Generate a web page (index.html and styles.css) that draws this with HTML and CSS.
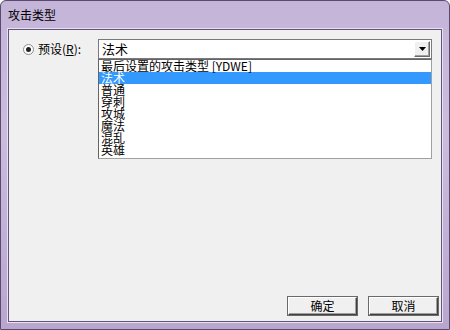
FILE: index.html
```html
<!DOCTYPE html>
<html>
<head>
<meta charset="utf-8">
<link rel="stylesheet" href="styles.css">
</head>
<body>
<div class="window">
  <div class="titlebar"><span class="title">攻击类型</span></div>
  <div class="client">
    <div class="main">
      <div class="preset">
        <span class="radio"><span class="dot"></span></span>
        <span class="label">预设(<u>R</u>):</span>
      </div>
      <div class="combo-col">
        <div class="combo">
          <span class="value">法术</span>
          <span class="drop"><svg width="7" height="4" viewBox="0 0 7 4"><path d="M0 0H7L3.5 4Z" fill="#000"/></svg></span>
        </div>
        <ul class="list">
          <li>最后设置的攻击类型 [YDWE]</li>
          <li class="sel">法术</li>
          <li>普通</li>
          <li>穿刺</li>
          <li>攻城</li>
          <li>魔法</li>
          <li>混乱</li>
          <li>英雄</li>
        </ul>
      </div>
    </div>
    <div class="buttons">
      <button class="btn">确定</button>
      <button class="btn">取消</button>
    </div>
  </div>
</div>
</body>
</html>
```
FILE: styles.css
```css
html, body {
  margin: 0;
  padding: 0;
}
body {
  width: 450px;
  height: 330px;
  overflow: hidden;
  font-family: "Noto Sans CJK SC", "DejaVu Sans", sans-serif;
  font-size: 12px;
  color: #000;
}
.window {
  width: 450px;
  height: 330px;
  box-sizing: border-box;
  display: flex;
  flex-direction: column;
  background: linear-gradient(to bottom, #c4b4d8 0%, #cbbcde 40%, #b9a6ce 100%);
  border: 1px solid #5a4a70;
  border-radius: 6px 6px 0 0;
}
.titlebar {
  height: 28px;
  display: flex;
  align-items: center;
  padding-left: 7px;
  flex: none;
}
.title {
  font-size: 12px;
  line-height: 14px;
  color: #000;
  margin-top: -1px;
}
.client {
  flex: 1;
  margin: 0 7px 7px 7px;
  background: #f0f0f0;
  border: 1px solid #62547a;
  box-shadow: 0 0 0 1px #e8e0f0;
  display: flex;
  flex-direction: column;
}
.main {
  flex: 1;
  display: flex;
  padding-top: 9px;
}
.preset {
  width: 89px;
  display: flex;
  align-items: flex-start;
  padding-top: 3px;
  box-sizing: border-box;
  padding-left: 14px;
}
.radio {
  width: 11px;
  height: 11px;
  box-sizing: border-box;
  border: 1px solid #8a8a8a;
  border-radius: 50%;
  background: #fff;
  display: flex;
  align-items: center;
  justify-content: center;
  margin-top: 2px;
  margin-right: 4px;
}
.dot {
  width: 5px;
  height: 5px;
  border-radius: 50%;
  background: #222;
}
.label {
  font-size: 12px;
  line-height: 14px;
}
.label u {
  text-decoration: underline;
}
.combo-col {
  width: 334px;
  display: flex;
  flex-direction: column;
}
.combo {
  height: 20px;
  box-sizing: border-box;
  border: 1px solid #7a7a7a;
  background: #fff;
  display: flex;
  align-items: center;
  justify-content: space-between;
  padding: 0 1px 0 3px;
}
.value {
  font-size: 13px;
  line-height: 14px;
}
.drop {
  width: 16px;
  height: 16px;
  box-sizing: border-box;
  background: #f0f0f0;
  border: 1px solid;
  border-color: #fff #6a6a6a #6a6a6a #fff;
  box-shadow: inset -1px -1px 0 #a0a0a0;
  display: flex;
  align-items: center;
  justify-content: center;
}
.list {
  list-style: none;
  margin: 0;
  padding: 0 0 2px 0;
  height: 100px;
  box-sizing: border-box;
  background: #fff;
  border: 1px solid #646464;
  border-right-color: #a0a0a0;
  border-bottom-color: #a0a0a0;
}
.list li {
  height: 12px;
  line-height: 12px;
  font-size: 12px;
  padding-left: 2px;
  white-space: nowrap;
}
.list li.sel {
  background: #3399ff;
  color: #fff;
}
.buttons {
  display: flex;
  justify-content: flex-end;
  gap: 12px;
  padding: 0 3px 6px 0;
}
.btn {
  width: 69px;
  height: 18px;
  box-sizing: border-box;
  font-family: "Noto Sans CJK SC", sans-serif;
  font-size: 12px;
  line-height: 14px;
  padding: 0;
  background: #f0f0f0;
  border: 1px solid;
  border-color: #fff #404040 #404040 #fff;
  box-shadow: inset -1px -1px 0 #a0a0a0, 0 0 0 1px #6a6a6a;
  color: #000;
}
```
